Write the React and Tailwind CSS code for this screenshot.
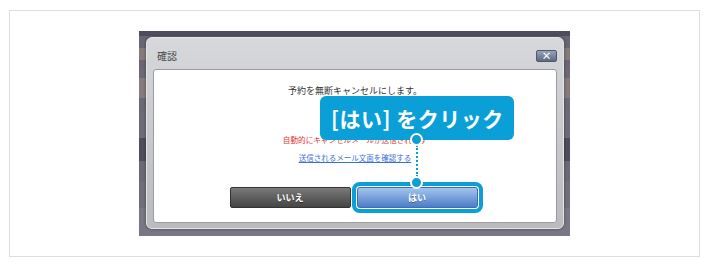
import React from 'react';

const bands = [
    { h: 5, c: 'bg-[#4f4d5c]' },
    { h: 12, c: 'bg-[#696574]' },
    { h: 12, c: 'bg-[#857a7c]' },
    { h: 8, c: 'bg-[#6a6675]' },
    { h: 10, c: 'bg-[#6c6876]' },
    { h: 20, c: 'bg-[#857a7c]' },
    { h: 13, c: 'bg-[#6b6877]' },
    { h: 27, c: 'bg-[#6e6b79]' },
    { h: 23, c: 'bg-[#4f4d5c]' },
    { h: 20, c: 'bg-[#6c6977]' },
    { h: 27, c: 'bg-[#716e7c]' },
    { h: 28, c: 'bg-[#7a7785]' },
];

const heightClass = {
    5: 'h-[5px]', 8: 'h-[8px]', 10: 'h-[10px]', 12: 'h-[12px]', 13: 'h-[13px]',
    20: 'h-[20px]', 23: 'h-[23px]', 27: 'h-[27px]', 28: 'h-[28px]',
};

const Backdrop = () => (
    <div className="col-start-1 row-start-1 flex flex-col">
        {bands.map((b, i) => (
            <div key={i} className={`${heightClass[b.h]} ${b.c} shrink-0`} />
        ))}
    </div>
);

const Dialog = () => (
    <div className="col-start-1 row-start-1 pt-[6px] pr-[6px] pb-[7px] pl-[7px]">
        <div className="h-full flex flex-col rounded-[6px] border border-[#e4e5e8] bg-gradient-to-b from-[#d6d8db] to-[#b9bbbf] shadow-[0_0_3px_rgba(0,0,0,0.45)]">
            {/* Title bar */}
            <div className="flex items-center justify-between pt-[11px] pl-[10px] pr-[6px] h-[24px]">
                <span className="text-[10px] leading-[12px] text-[#4a4a4a]">確認</span>
                <div className="w-[21px] h-[12px] rounded-[2px] border border-[#4b5870] bg-gradient-to-b from-[#97a3b7] to-[#5d6b83] flex items-center justify-center text-white text-[10px] leading-none font-bold">
                    ×
                </div>
            </div>

            {/* Body */}
            <div className="mt-[7px] mx-[6px] mb-[5px] flex-1 rounded-[3px] border border-[#9a9ca0] bg-white flex flex-col items-center">
                <p className="mt-[15px] text-[9px] leading-[12px] text-[#333]">予約を無断キャンセルにします。</p>
                <p className="mt-[5px] self-start ml-[166px] text-[9px] leading-[10px] text-[#333]">・</p>
                <p className="mt-[23px] text-[7.6px] leading-[10px] text-[#e8312f]">自動的にキャンセルメールが送信されます</p>
                <p className="mt-[8px] text-[7.5px] leading-[10px] text-[#3a6fd8] underline">送信されるメール文面を確認する</p>
                <div className="mt-[24px] flex gap-[6px] pr-[3px]">
                    <button className="w-[121px] h-[21px] rounded-[2px] border border-[#333] bg-gradient-to-b from-[#7a7a7a] to-[#454545] text-white text-[9px] font-bold leading-none [text-shadow:0_1px_0_rgba(0,0,0,0.5)]">
                        いいえ
                    </button>
                    <button className="w-[121px] h-[21px] rounded-[3px] border border-[#3f6db3] bg-gradient-to-b from-[#a3c5ef] to-[#4e7dc6] text-white text-[9px] font-bold leading-none shadow-[0_0_0_1px_#fff,0_0_0_5px_#0a9fd6] [text-shadow:0_1px_0_rgba(0,0,0,0.35)]">
                        はい
                    </button>
                </div>
            </div>
        </div>
    </div>
);

export default function App() {
    return (
        <div
            className="w-[710px] h-[267px] bg-white pt-[10px] pl-[9px]"
            style={{ fontFamily: '"Noto Sans CJK JP", "Noto Sans", sans-serif' }}
        >
            <div className="w-[691px] h-[247px] border border-[#dedede] flex items-center justify-center">
                <div className="relative w-[431px] h-[205px] grid">
                    <Backdrop />
                    <Dialog />

                    {/* Callout annotation */}
                    <div className="absolute left-[181px] top-[65px] w-[194px] h-[44px] rounded-[6px] bg-[#0a9fd6] flex items-center pl-[11px] text-white text-[21px] font-bold leading-none tracking-[0.5px]">
                        [はい] をクリック
                    </div>
                    <div className="absolute left-[277px] top-[114px] h-[32px] border-l-2 border-dotted border-[#0a9fd6]" />
                    <div className="absolute left-[271px] top-[102px] w-[13px] h-[13px] rounded-full bg-[#0a9fd6] border-2 border-white" />
                    <div className="absolute left-[271px] top-[145px] w-[13px] h-[13px] rounded-full bg-[#0a9fd6] border-2 border-white" />
                </div>
            </div>
        </div>
    );
}
